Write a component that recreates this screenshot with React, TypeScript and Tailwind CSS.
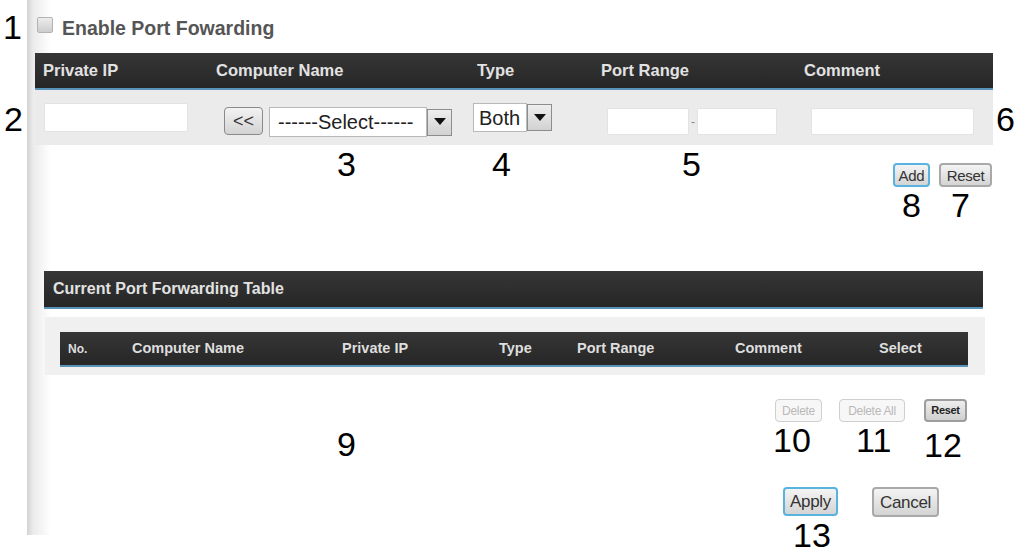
import React from "react";

function DropArrow({ h }: { h: string }) {
  return (
    <div
      className={`flex w-[25px] ${h} items-center justify-center border border-[#8d8d8d] bg-[linear-gradient(to_bottom,#eeeeee,#d2d2d2)]`}
    >
      <svg width="12" height="8" viewBox="0 0 12 8">
        <polygon points="0,0 12,0 6,7" fill="#111" />
      </svg>
    </div>
  );
}

function Field({ w, extra = "" }: { w: string; extra?: string }) {
  return (
    <div
      className={`${w} ${extra} rounded-[2px] border border-[#e3e3e3] bg-white`}
    />
  );
}

function Btn({
  text,
  w,
  h,
  tone,
  size,
  extra = "",
}: {
  text: string;
  w: string;
  h: string;
  tone: "blue" | "grey" | "off" | "dark";
  size: string;
  extra?: string;
}) {
  const look =
    tone === "blue"
      ? "border-2 border-[#58b3df] text-[#333] bg-[linear-gradient(to_bottom,#f4f4f4,#d4d4d4)]"
      : tone === "grey"
        ? "border-2 border-[#a9a9a9] text-[#333] bg-[linear-gradient(to_bottom,#f4f4f4,#d4d4d4)]"
        : tone === "off"
          ? "border border-[#cfcfcf] text-[#b9b9b9] bg-[#f7f7f7]"
          : "border-2 border-[#9d9d9d] text-[#222] font-bold bg-[linear-gradient(to_bottom,#eeeeee,#cfcfcf)]";
  return (
    <div
      className={`flex ${w} ${h} ${extra} items-center justify-center rounded-[4px] ${look} ${size} leading-none tracking-[-0.3px]`}
    >
      {text}
    </div>
  );
}

// callout digits drawn over the screenshot
function Num({ n, pos }: { n: string; pos: string }) {
  return (
    <span className={`absolute ${pos} text-[34px] leading-[28px] text-black`}>
      {n}
    </span>
  );
}

export default function App() {
  return (
    <div className="relative h-[553px] w-[1021px] overflow-hidden bg-white font-['Liberation_Sans',Arial,sans-serif]">
      <div className="ml-[27px] flex h-[535px] w-[975px] flex-col bg-[linear-gradient(to_right,#d2d2d2,#ebebeb_6px,#ffffff_24px)] pt-[17px]">
        {/* enable checkbox */}
        <div className="flex h-[16px] items-start pl-[10px]">
          <div className="h-[16px] w-[16px] rounded-[2px] border border-[#b3b3b3] bg-[linear-gradient(to_bottom,#ececec,#cdcdcd)]" />
          <span className="ml-[9px] mt-[2px] text-[19.5px] font-bold leading-none text-[#555]">
            Enable Port Fowarding
          </span>
        </div>

        {/* add rule header */}
        <div className="ml-[8px] mt-[20px] flex h-[37px] w-[958px] items-center border-b-2 border-[#5a93ba] bg-[linear-gradient(to_bottom,#363636,#262626)] pl-[8px] text-[16.5px] font-bold text-[#e2e2e2]">
          <span className="w-[173px]">Private IP</span>
          <span className="w-[261px]">Computer Name</span>
          <span className="w-[124px]">Type</span>
          <span className="w-[203px]">Port Range</span>
          <span>Comment</span>
        </div>

        {/* add rule inputs */}
        <div className="ml-[8px] flex h-[55px] w-[958px] items-center bg-[#ebebeb]">
          <Field w="ml-[9px] w-[144px]" extra="h-[29px]" />
          <div className="ml-[36px] mt-[7px] flex h-[28px] w-[39px] items-center justify-center rounded-[4px] border border-[#8a8a8a] bg-[linear-gradient(to_bottom,#f3f3f3,#d3d3d3)] text-[18px] leading-none text-[#333]">
            &lt;&lt;
          </div>
          <div className="ml-[6px] mt-[9px] flex items-center">
            <div className="flex h-[30px] w-[158px] items-center border border-[#b9b9b9] bg-white pl-[8px] text-[20px] leading-none text-[#222]">
              ------Select------
            </div>
            <DropArrow h="h-[27px]" />
          </div>
          <div className="ml-[21px] flex items-center">
            <div className="flex h-[29px] w-[54px] items-center border border-[#b9b9b9] bg-white pl-[5px] text-[20px] leading-none text-[#222]">
              Both
            </div>
            <DropArrow h="h-[27px]" />
          </div>
          <div className="ml-[55px] mt-[8px] flex items-center">
            <Field w="w-[82px]" extra="h-[27px]" />
            <span className="flex w-[8px] justify-center text-[12px] text-[#888]">-</span>
            <Field w="w-[80px]" extra="h-[27px]" />
          </div>
          <Field w="ml-[34px] w-[163px]" extra="mt-[8px] h-[27px]" />
        </div>

        {/* add / reset */}
        <div className="mt-[18px] flex pl-[866px]">
          <Btn text="Add" w="w-[37px]" h="h-[24px]" tone="blue" size="text-[15px]" />
          <Btn text="Reset" w="w-[53px]" h="h-[24px]" tone="grey" size="text-[15px]" extra="ml-[9px]" />
        </div>

        {/* current table */}
        <div className="ml-[17px] mt-[84px] flex h-[38px] w-[939px] items-center border-b-2 border-[#5a93ba] bg-[linear-gradient(to_bottom,#363636,#262626)] pl-[9px] text-[16px] font-bold text-[#e2e2e2]">
          Current Port Forwarding Table
        </div>
        <div className="ml-[18px] mt-[8px] h-[58px] w-[940px] bg-[#f0f0f0] pl-[15px] pt-[15px]">
          <div className="flex h-[35px] w-[908px] items-center border-b-2 border-[#5a93ba] bg-[linear-gradient(to_bottom,#363636,#262626)] pl-[8px] text-[14.5px] font-bold text-[#dedede]">
            <span className="w-[64px] text-[12px]">No.</span>
            <span className="w-[210px]">Computer Name</span>
            <span className="w-[157px]">Private IP</span>
            <span className="w-[78px]">Type</span>
            <span className="w-[158px]">Port Range</span>
            <span className="w-[144px]">Comment</span>
            <span>Select</span>
          </div>
        </div>

        {/* table actions */}
        <div className="mt-[24px] flex pl-[748px]">
          <Btn text="Delete" w="w-[47px]" h="h-[23px]" tone="off" size="text-[12px]" />
          <Btn text="Delete All" w="w-[66px]" h="h-[23px]" tone="off" size="text-[12px]" extra="ml-[17px]" />
          <Btn text="Reset" w="w-[43px]" h="h-[23px]" tone="dark" size="text-[11px]" extra="ml-[19px]" />
        </div>

        <div className="mt-[65px] flex pl-[756px]">
          <Btn text="Apply" w="w-[55px]" h="h-[29px]" tone="blue" size="text-[17px]" />
          <Btn text="Cancel" w="w-[67px]" h="h-[30px]" tone="grey" size="text-[17px]" extra="ml-[34px]" />
        </div>
      </div>

      <Num n="1" pos="left-[3px] top-[13px]" />
      <Num n="2" pos="left-[4px] top-[105px]" />
      <Num n="3" pos="left-[337px] top-[150px]" />
      <Num n="4" pos="left-[492px] top-[150px]" />
      <Num n="5" pos="left-[682px] top-[150px]" />
      <Num n="6" pos="left-[996px] top-[105px]" />
      <Num n="7" pos="left-[951px] top-[191px]" />
      <Num n="8" pos="left-[902px] top-[191px]" />
      <Num n="9" pos="left-[337px] top-[430px]" />
      <Num n="10" pos="left-[773px] top-[426px]" />
      <Num n="11" pos="left-[856px] top-[426px]" />
      <Num n="12" pos="left-[924px] top-[431px]" />
      <Num n="13" pos="left-[793px] top-[521px]" />
    </div>
  );
}
